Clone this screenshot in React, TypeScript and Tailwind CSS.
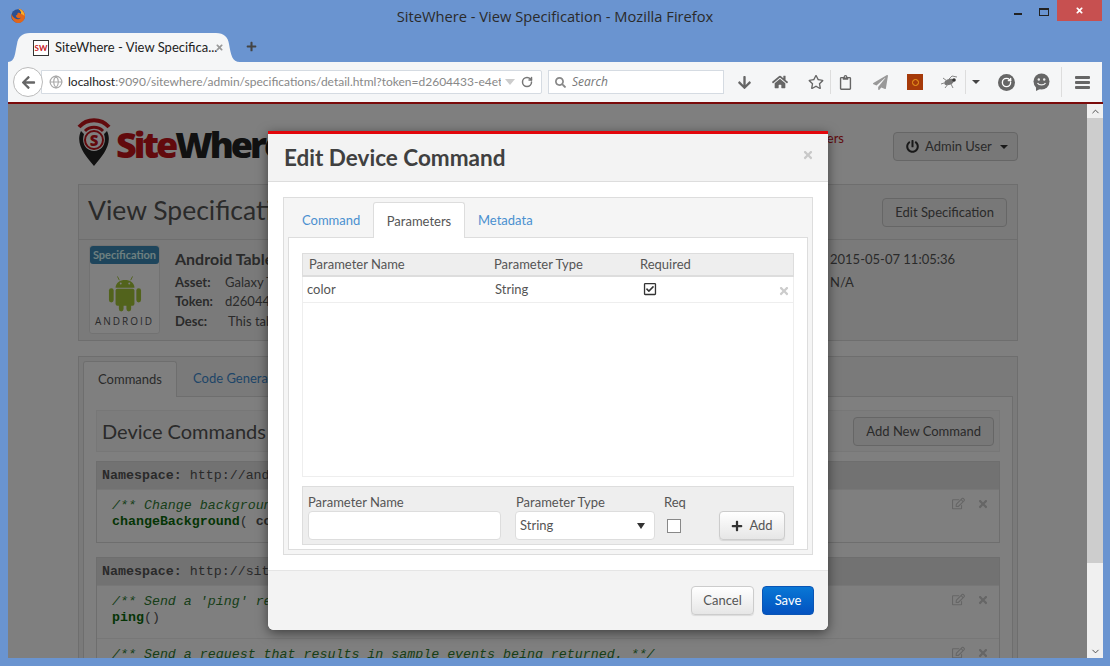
import type { ReactNode } from 'react'
import { FaArrowDown, FaArrowLeft, FaHome, FaPaperPlane, FaPlus, FaPowerOff, FaRegCheckSquare, FaRegClipboard, FaRegEdit, FaRegStar, FaSearch, FaTimes } from 'react-icons/fa'
import { ChevronDown, ChevronUp, Globe, RotateCw } from 'lucide-react'

const sans = "font-['Lato',sans-serif]"
const mono = "font-['Liberation_Mono',monospace]"

function FirefoxLogo() {
    return (
        <svg width="16" height="16" viewBox="0 0 16 16">
            <circle cx="8" cy="8" r="6.8" fill="#2b4f91" />
            <path d="M1.5 6 C0.5 12 6 15.8 9.5 15 C13.5 14.2 15.8 10 14.8 6 C14 3 11 0.8 8.5 0.8 C10.5 2.5 11.5 4 11 6 C10 4.8 8.5 4.6 7.5 5.2 C8 6.5 6.5 7 5.8 7.6 C6 10 9 11 11 9.5 C9.5 12.5 4 12 1.5 6 Z" fill="#e0661a" />
            <path d="M8.5 0.8 C10.5 2.5 11.5 4 11 6 C12.5 6 13.5 7 14.4 8 C14.8 5 12 1.3 8.5 0.8 Z" fill="#f4b12c" />
        </svg>
    )
}

function LogoPin() {
    return (
        <svg width="34" height="50" viewBox="0 0 34 50" className="-ml-[1px]">
            <path d="M2 10 C10 1 24 1 32 10" fill="none" stroke="#c5141a" strokeWidth="4" />
            <path d="M8 14 C13 9 21 9 26 14" fill="none" stroke="#c5141a" strokeWidth="3" />
            <path d="M4 14 C-2 27 8 38 17 49 C26 38 36 27 30 14 L27 17 C30 26 25 34 17 34 C9 34 4 26 7 17 Z" fill="#222" />
            <circle cx="17" cy="23" r="9" fill="none" stroke="#c5141a" strokeWidth="2" />
            <text x="17" y="28.5" textAnchor="middle" fontSize="15" fontWeight="800" fill="#c5141a" fontFamily="Open Sans">S</text>
        </svg>
    )
}

function AndroidRobot() {
    return (
        <svg width="34" height="39" viewBox="0 0 36 40">
            <g fill="#a4c639">
                <path d="M8 15 C8 4 28 4 28 15 Z" />
                <rect x="8" y="16" width="20" height="18" rx="2" />
                <rect x="1" y="15.5" width="5" height="15" rx="2.5" />
                <rect x="30" y="15.5" width="5" height="15" rx="2.5" />
                <rect x="11.5" y="30" width="5" height="10" rx="2.5" />
                <rect x="19.5" y="30" width="5" height="10" rx="2.5" />
            </g>
            <path d="M12 7 L10 3 M24 7 L26 3" stroke="#a4c639" strokeWidth="1" />
            <circle cx="13.5" cy="10.5" r="1" fill="#fff" />
            <circle cx="22.5" cy="10.5" r="1" fill="#fff" />
        </svg>
    )
}

// tab outline with the flared bottom corners
function TabShape() {
    return (
        <svg width="232" height="29" viewBox="0 0 232 29" className="absolute left-0 top-0">
            <path d="M0 29 C7 29 7 20 9 11 C10 4 14 0 22 0 L208 0 C216 0 220 4 221 11 C223 22 224 29 232 29 Z" fill="#f5f6f7" />
        </svg>
    )
}

function BugIcon() {
    return (
        <svg width="20" height="14" viewBox="0 0 20 14" className="shrink-0">
            <ellipse cx="9" cy="7" rx="5" ry="3" fill="#777" transform="rotate(-20 9 7)" />
            <circle cx="14" cy="5" r="1.8" fill="#333" />
            <path d="M8 5 L12 1 L17 2 M7 6 L3 3 M8 9 L5 13 M11 9 L13 13 M4 8 L1 9" stroke="#888" fill="none" strokeWidth="1" />
        </svg>
    )
}

function SmileBubble() {
    return (
        <svg width="17" height="18" viewBox="0 0 17 18" className="shrink-0">
            <circle cx="8.5" cy="8.5" r="8" fill="#666" />
            <path d="M3 14 L3 18 L7 16 Z" fill="#666" />
            <circle cx="5.8" cy="6.5" r="1.2" fill="#eee" />
            <circle cx="11.2" cy="6.5" r="1.2" fill="#eee" />
            <path d="M4.5 10 C6 12.5 11 12.5 12.5 10" stroke="#eee" strokeWidth="1.4" fill="none" />
        </svg>
    )
}

interface CommandRow {
    comment: string;
    name: string;
    rest: ReactNode;
}

function CommandBlock({ namespace, rows }: { namespace: string; rows: CommandRow[] }) {
    return (
        <div className={`border border-[#ddd] ${mono} text-[13.3px] leading-[16px] text-[#555]`}>
            <div className="h-[27px] bg-[#e5e5e5] pl-[5px] pt-[6px] whitespace-nowrap">
                <b>Namespace:</b> {namespace}
            </div>
            {rows.map((row, i) => (
                <div key={i} className="relative border-t border-[#eee] first:border-t-0 h-[53px] pl-[15px] pt-[8px] whitespace-nowrap">
                    <div className="italic text-[#2e7d32]">{row.comment}</div>
                    <div><b className="text-[#0b6b0b]">{row.name}</b>{row.rest}</div>
                    <div className="absolute right-[10px] top-[7px] flex items-center gap-[12px] text-[#ccc]">
                        <FaRegEdit size={13} />
                        <FaTimes size={12} />
                    </div>
                </div>
            ))}
        </div>
    )
}

function Page() {
    return (
        <div className={`flex-1 bg-white overflow-hidden pl-[70px] ${sans}`}>
            <div className="w-[940px]">
                <div className="flex items-start h-[80px] pt-[13px]">
                    <LogoPin />
                    <div className="ml-[5px] mt-[6px] font-['Open_Sans',sans-serif] text-[36px] leading-[44px] font-extrabold tracking-[-3px]">
                        <span className="text-[#c5141a]">Site</span><span className="text-[#222]">Where</span>
                    </div>
                    <div className="ml-auto flex items-center">
                        <span className="mr-[49px] text-[13px] text-[#c5141a]">Users</span>
                        <div className="flex items-center gap-[6px] h-[29px] w-[125px] mt-[15px] pl-[12px] rounded-[4px] border border-[#ccc] bg-[#f0f0f0] text-[13px] text-[#555]">
                            <FaPowerOff size={13} className="text-[#333]" />
                            <span>Admin User</span>
                            <span className="ml-[2px] border-x-[4px] border-t-[4px] border-x-transparent border-t-[#333]" />
                        </div>
                    </div>
                </div>
                <div className="border border-[#ddd] bg-[#f5f5f5]">
                    <div className="flex items-center justify-between h-[55px] border-b border-[#ddd] pl-[9px] pr-[10px]">
                        <span className="text-[26.5px] leading-[34px] -mt-[4px] text-[#555]">View Specification</span>
                        <div className="h-[29px] rounded-[4px] border border-[#ccc] bg-[#f0f0f0] px-[12px] text-[13px] leading-[27px] text-[#555]">Edit Specification</div>
                    </div>
                    <div className="flex h-[100px] pt-[5px] pl-[10px] text-[13px] text-[#555]">
                        <div className="w-[71px] h-[89px] border border-[#e5e5e5] bg-white rounded-[3px] flex flex-col items-center">
                            <div className="w-full h-[18px] rounded-[3px] bg-[#3d8bb8] text-[11px] leading-[18px] font-bold text-[#dff] text-center whitespace-nowrap">Specification</div>
                            <div className="mt-[9px]"><AndroidRobot /></div>
                            <div className="mt-[4px] text-[10px] leading-[10px] tracking-[2px] text-[#555] font-['Open_Sans',sans-serif]">ANDROID</div>
                        </div>
                        <div className="ml-[15px]">
                            <div className="text-[16px] leading-[20px] mt-[4px] font-bold">Android Tablet</div>
                            <div className="leading-[19px] mt-[4px] whitespace-nowrap"><b className="inline-block w-[50px]">Asset:</b>Galaxy Tab</div>
                            <div className="leading-[19px] whitespace-nowrap"><b className="inline-block w-[50px]">Token:</b>d2604433</div>
                            <div className="leading-[21px] whitespace-nowrap"><b className="inline-block w-[53px]">Desc:</b>This tablet</div>
                        </div>
                        <div className="ml-auto w-[187px] text-[13px] leading-[23px] mt-[3px]">
                            <div>2015-05-07 11:05:36</div>
                            <div>N/A</div>
                        </div>
                    </div>
                </div>
                <div className="mt-[15px] border border-[#ddd] bg-[#f5f5f5] px-[4px] pt-[4px] h-[400px]">
                    <div className="flex h-[35px] text-[13px] leading-[34px]">
                        <div className="relative z-10 h-[36px] w-[94px] rounded-t-[3px] border border-b-0 border-[#ddd] bg-white text-center text-[#555]">Commands</div>
                        <div className="ml-[16px] text-[#3d8bd0] whitespace-nowrap">Code Generation</div>
                    </div>
                    <div className="border border-[#ddd] bg-white px-[12px] pt-[13px] h-[360px]">
                        <div className="flex items-center justify-between h-[42px] border border-[#eee] bg-[#f8f8f8] pl-[5px] pr-[5px]">
                            <span className="text-[20px] text-[#555]">Device Commands</span>
                            <div className="h-[29px] rounded-[4px] border border-[#ccc] bg-[#f0f0f0] px-[12px] text-[13px] leading-[27px] text-[#555]">Add New Command</div>
                        </div>
                        <div className="mt-[9px]">
                            <CommandBlock namespace="http://android" rows={[{ comment: '/** Change background', name: 'changeBackground', rest: <>( <b>color</b> )</> }]} />
                        </div>
                        <div className="mt-[14px]">
                            <CommandBlock
                                namespace="http://sitewhere"
                                rows={[
                                    { comment: "/** Send a 'ping' request", name: 'ping', rest: '()' },
                                    { comment: '/** Send a request that results in sample events being returned. **/', name: 'testEvents', rest: '()' },
                                ]}
                            />
                        </div>
                    </div>
                </div>
            </div>
        </div>
    )
}

function Modal() {
    const btn = 'rounded-[4px] border border-[#ccc] bg-gradient-to-b from-white to-[#e6e6e6] shadow-[0_1px_1px_rgba(0,0,0,0.1)]'
    return (
        <div className={`absolute left-[260px] top-[27px] w-[560px] h-[499px] flex flex-col rounded-b-[6px] border-t-[3px] border-[#e2060b] bg-white shadow-[0_3px_12px_rgba(0,0,0,0.5)] ${sans} text-[13px] text-[#555]`}>
            <div className="flex items-center justify-between h-[48px] shrink-0 border-b border-[#ddd] bg-[#f3f3f3] pl-[16px] pr-[14px]">
                <h3 className="mt-[1px] text-[22.5px] font-bold text-[#404040]">Edit Device Command</h3>
                <FaTimes size={12} className="-mt-[6px] text-[#c8c8c8]" />
            </div>
            <div className="flex-1 px-[15px] pt-[15px]">
                <div className="h-[358px] border border-[#ddd] bg-[#f5f5f5] px-[4px] pt-[4px]">
                    <div className="flex h-[35px] leading-[37px]">
                        <div className="w-[85px] pl-[14px] text-[#4a90d0]">Command</div>
                        <div className="relative z-10 h-[36px] w-[92px] rounded-t-[3px] border border-b-0 border-[#ddd] bg-white text-center">Parameters</div>
                        <div className="pl-[13px] text-[#4a90d0]">Metadata</div>
                    </div>
                    <div className="h-[313px] border border-[#ddd] bg-white px-[13px] pt-[15px]">
                        <div className="flex h-[24px] border border-[#ddd] border-b-2 bg-[#eee] leading-[20px]">
                            <div className="w-[191px] pl-[6px]">Parameter Name</div>
                            <div className="w-[146px]">Parameter Type</div>
                            <div>Required</div>
                        </div>
                        <div className="h-[200px] border border-t-0 border-[#eee]">
                            <div className="relative flex h-[26px] border-b border-[#eee] leading-[24px]">
                                <div className="w-[192px] pl-[4px]">color</div>
                                <div className="w-[148px]">String</div>
                                <FaRegCheckSquare size={14} className="mt-[5px] text-[#333]" />
                                <FaTimes size={12} className="absolute right-[3px] top-[8px] text-[#ccc]" />
                            </div>
                        </div>
                        <div className="mt-[9px] flex h-[59px] border border-[#ddd] bg-[#eee] pl-[5px]">
                            <div className="w-[207px]">
                                <div className="h-[24px] leading-[30px]">Parameter Name</div>
                                <div className="h-[29px] w-[193px] rounded-[4px] border border-[#ddd] bg-white" />
                            </div>
                            <div className="w-[149px]">
                                <div className="h-[24px] leading-[30px] pl-[1px]">Parameter Type</div>
                                <div className="flex items-center justify-between h-[29px] w-[140px] rounded-[4px] border border-[#ddd] bg-white pl-[4px] pr-[9px]">
                                    String
                                    <span className="border-x-[4px] border-t-[6px] border-x-transparent border-t-[#333]" />
                                </div>
                            </div>
                            <div className="w-[55px]">
                                <div className="h-[24px] leading-[30px]">Req</div>
                                <div className="ml-[3px] mt-[8px] h-[14px] w-[14px] border border-[#888] bg-white" />
                            </div>
                            <div className={`flex items-center justify-center gap-[6px] mt-[24px] h-[29px] w-[66px] ${btn}`}>
                                <FaPlus size={12} className="text-[#333]" />
                                Add
                            </div>
                        </div>
                    </div>
                </div>
            </div>
            <div className="flex items-center justify-end gap-[8px] h-[60px] shrink-0 border-t border-[#e5e5e5] bg-[#f3f3f3] rounded-b-[6px] pr-[14px]">
                <div className={`h-[29px] w-[63px] text-center leading-[27px] ${btn}`}>Cancel</div>
                <div className="h-[29px] w-[52px] rounded-[4px] border border-[#0a55b5] bg-gradient-to-b from-[#0a77d5] to-[#0552c0] text-center leading-[27px] text-white">Save</div>
            </div>
        </div>
    )
}

export default function App() {
    return (
        <div className="relative flex h-[666px] w-[1110px] flex-col overflow-hidden bg-[#6a94d0] font-['Open_Sans',sans-serif]">
            <div className="relative flex h-[33px] shrink-0 items-center justify-center text-[14.7px] text-[#2b2b2b]">
                <div className="absolute left-[10px] top-[8px]"><FirefoxLogo /></div>
                <span>SiteWhere - View Specification - Mozilla Firefox</span>
                <div className="absolute right-[8px] top-0 flex items-start">
                    <div className="mr-[17px] mt-[13px] h-[2px] w-[8px] bg-[#222]" />
                    <div className="mr-[8px] mt-[8px] h-[8px] w-[10px] border border-t-2 border-[#222]" />
                    <div className="flex h-[21px] w-[45px] items-center justify-center bg-[#c75050] text-white"><FaTimes size={9} /></div>
                </div>
            </div>
            <div className="flex h-[29px] shrink-0 items-end pl-[8px]">
                <div className={`relative flex h-[29px] w-[232px] items-center pl-[25px] text-[13px] text-[#222] ${sans}`}>
                    <TabShape />
                    <div className="relative flex h-[16px] w-[16px] items-center justify-center border border-[#333] bg-white font-bold text-[8px] text-[#c5141a]">SW</div>
                    <span className="relative ml-[6px] w-[158px] whitespace-nowrap">SiteWhere - View Specifica...</span>
                    <FaTimes size={9} className="relative ml-[2px] text-[#999]" />
                </div>
                <FaPlus size={11} className="mb-[10px] ml-[6px] text-[#444]" />
            </div>
            <div className="mx-[8px] flex h-[40px] shrink-0 items-center bg-[#f5f6f7] text-[#666]">
                <div className="relative z-10 ml-[5px] flex h-[30px] w-[30px] items-center justify-center rounded-full border border-[#bbb] bg-white">
                    <FaArrowLeft size={15} className="text-[#666]" />
                </div>
                <div className={`-ml-[2px] flex h-[24px] w-[501px] items-center rounded-r-[2px] border border-[#d5dbe2] bg-white pl-[7px] text-[12px] ${sans}`}>
                    <Globe size={14} className="shrink-0 text-[#aaa]" />
                    <span className="ml-[5px] w-[433px] overflow-hidden whitespace-nowrap text-[#888]"><span className="text-[#222]">localhost</span>:9090/sitewhere/admin/specifications/detail.html?token=d2604433-e4et</span>
                    <span className="ml-[4px] border-x-[5px] border-t-[6px] border-x-transparent border-t-[#ccc]" />
                    <RotateCw size={12} className="ml-[6px] shrink-0 text-[#777]" strokeWidth={3} />
                </div>
                <div className="ml-[6px] flex h-[24px] w-[176px] items-center border border-[#d5dbe2] bg-white pl-[6px] text-[12px] italic text-[#777]">
                    <FaSearch size={11} className="text-[#888]" />
                    <span className="ml-[6px]">Search</span>
                </div>
                <FaArrowDown size={15} className="ml-[13px] shrink-0" />
                <FaHome size={16} className="ml-[20px] shrink-0" />
                <FaRegStar size={16} className="ml-[20px] shrink-0" />
                <div className="ml-[6px] h-[24px] w-px bg-[#ddd]" />
                <FaRegClipboard size={15} className="ml-[7px] shrink-0" />
                <FaPaperPlane size={15} className="ml-[20px] shrink-0 text-[#999]" />
                <div className="ml-[19px] flex h-[16px] w-[16px] shrink-0 items-center justify-center bg-[#a63a0a]"><div className="h-[7px] w-[7px] rounded-full border border-[#f0a020]" /></div>
                <div className="ml-[17px]"><BugIcon /></div>
                <div className="ml-[5px] h-[24px] w-px bg-[#ddd]" />
                <span className="ml-[6px] border-x-[4px] border-t-[4px] border-x-transparent border-t-[#444]" />
                <div className="ml-[18px] flex h-[17px] w-[17px] shrink-0 items-center justify-center rounded-full bg-[#666] text-white"><RotateCw size={11} strokeWidth={3} /></div>
                <div className="ml-[18px]"><SmileBubble /></div>
                <div className="ml-[11px] h-[30px] w-px bg-[#ddd]" />
                <div className="ml-[13px] flex w-[15px] shrink-0 flex-col gap-[2px]">
                    <div className="h-[3px] rounded-[1px] bg-[#666]" />
                    <div className="h-[3px] rounded-[1px] bg-[#666]" />
                    <div className="h-[3px] rounded-[1px] bg-[#666]" />
                </div>
            </div>
            <div className="ml-[8px] mr-[7px] h-[2px] shrink-0 bg-[#7a0a0a]" />
            <div className="relative ml-[8px] mr-[7px] flex h-[554px] shrink-0">
                <Page />
                <div className="relative z-30 flex w-[16px] shrink-0 flex-col justify-between bg-[#f0f0f0]">
                    <div className="flex h-[14px] items-center justify-center bg-[#f0f0f0] text-[#444]"><ChevronUp size={11} /></div>
                    <div className="mb-auto h-[445px] bg-[#cdcdcd]" />
                    <div className="flex h-[14px] items-center justify-center text-[#444]"><ChevronDown size={11} /></div>
                </div>
                <div className="absolute inset-y-0 left-0 right-[16px] z-10 bg-black/50" />
                <div className="z-20"><Modal /></div>
            </div>
        </div>
    )
}
